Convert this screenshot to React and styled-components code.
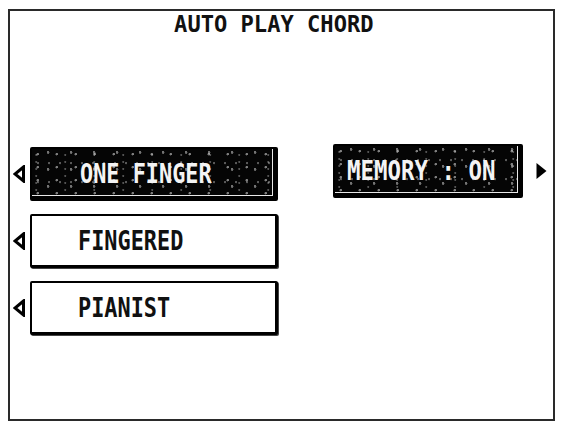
import styled, { createGlobalStyle } from "styled-components";

const GlobalStyle = createGlobalStyle`
  html, body {
    margin: 0;
    padding: 0;
    background: #fff;
  }
  body {
    font-family: "DejaVu Sans Mono", "Liberation Mono", monospace;
  }
`;

const Screen = styled.div`
  width: 562px;
  height: 426px;
  padding: 9px 7px 5px 8px;
  box-sizing: border-box;
  background: #fff;
`;

const Frame = styled.div`
  height: 100%;
  border: 2px solid #2a2a2a;
  box-sizing: border-box;
  display: flex;
  flex-direction: column;
`;

const Title = styled.h1`
  margin: 0;
  padding: 2px 16px 0 0;
  text-align: center;
  font-family: "DejaVu Sans Mono", monospace;
  font-weight: bold;
  font-size: 23px;
  line-height: 23px;
  color: #111;
  transform: scaleX(0.96);
`;

const Body = styled.div`
  display: flex;
  align-items: flex-start;
  padding: 111px 0 0 3px;
  gap: 55px;
`;

const Options = styled.div`
  display: flex;
  flex-direction: column;
  gap: 13px;
`;

const Row = styled.div`
  display: flex;
  align-items: center;
  gap: 5px;
`;

const speckle = `
  radial-gradient(circle at 30% 40%, rgba(210,210,210,0.6) 0 1px, transparent 1.5px),
  radial-gradient(circle at 70% 20%, rgba(225,225,225,0.5) 0 1.1px, transparent 1.6px),
  radial-gradient(circle at 55% 75%, rgba(190,190,190,0.45) 0 0.9px, transparent 1.4px),
  radial-gradient(circle at 15% 85%, rgba(200,200,200,0.4) 0 0.8px, transparent 1.3px)
`;

const OptionBox = styled.div`
  width: ${(p) => p.$width}px;
  height: 54px;
  box-sizing: border-box;
  display: flex;
  align-items: center;
  padding-left: ${(p) => p.$indent}px;
  border: 2px solid #000;
  border-bottom-width: 3px;
  border-right-width: 3px;
  border-radius: 2px;
  background-color: ${(p) => (p.$active ? "#050505" : "#fff")};
  background-image: ${(p) => (p.$active ? speckle : "none")};
  background-size: 19px 13px, 23px 17px, 11px 19px, 29px 7px;
  box-shadow: ${(p) =>
    p.$active
      ? "inset -2px -2px 0 #000, inset -3px -3px 0 #e8e8e8"
      : "1px 1px 0 #444"};
  color: ${(p) => (p.$active ? "#f4f4f4" : "#111")};
`;

const Label = styled.span`
  display: inline-block;
  font-family: "DejaVu Sans Mono", monospace;
  font-weight: bold;
  font-size: 27px;
  line-height: 27px;
  white-space: pre;
  transform: scaleX(${(p) => p.$scale || 0.81});
  transform-origin: left center;
`;

const ArrowIcon = styled.svg`
  flex: none;
  display: block;
`;

const Memory = styled.div`
  display: flex;
  align-items: center;
  gap: 13px;
  margin-top: -3px;
`;

const LeftArrow = () => (
  <ArrowIcon width="12" height="18" viewBox="0 0 12 18">
    <polygon
      points="10.5,2 2,9 10.5,16"
      fill="#fff"
      stroke="#000"
      strokeWidth="3"
      strokeLinejoin="miter"
    />
  </ArrowIcon>
);

const RightArrow = () => (
  <ArrowIcon width="11" height="18" viewBox="0 0 11 18">
    <polygon points="0.5,1 10.5,9 0.5,17" fill="#000" />
  </ArrowIcon>
);

const options = [
  { name: "ONE FINGER", active: true, indent: 48 },
  { name: "FINGERED", active: false, indent: 46 },
  { name: "PIANIST", active: false, indent: 46 },
];

export default function App() {
  return (
    <>
      <GlobalStyle />
      <Screen>
        <Frame>
          <Title>AUTO PLAY CHORD</Title>
          <Body>
            <Options>
              {options.map((o) => (
                <Row key={o.name}>
                  <LeftArrow />
                  <OptionBox $width={248} $active={o.active} $indent={o.indent}>
                    <Label>{o.name}</Label>
                  </OptionBox>
                </Row>
              ))}
            </Options>
            <Memory>
              <OptionBox $width={190} $active $indent={12}>
                <Label $scale={0.83}>MEMORY : ON</Label>
              </OptionBox>
              <RightArrow />
            </Memory>
          </Body>
        </Frame>
      </Screen>
    </>
  );
}
